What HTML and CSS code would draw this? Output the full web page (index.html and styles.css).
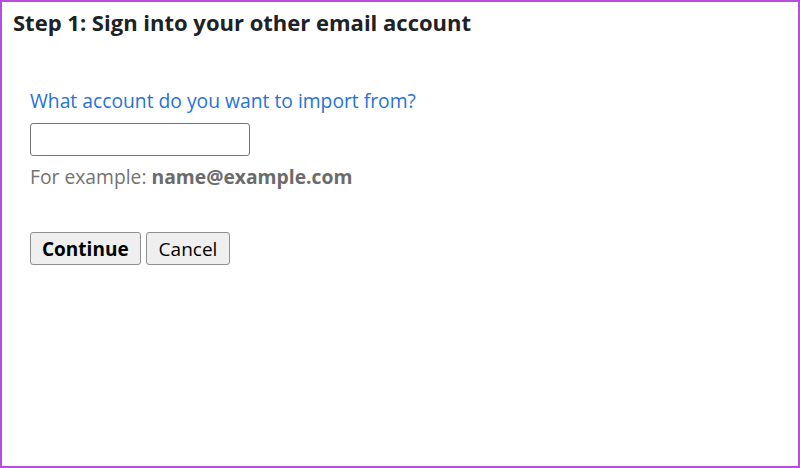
FILE: index.html
```html
<!DOCTYPE html>
<html lang="en">
<head>
    <meta charset="UTF-8">
    <meta name="viewport" content="width=device-width, initial-scale=1.0">
    <title>Import mail and contacts</title>
    <link rel="stylesheet" href="styles.css">
</head>
<body>
    <div class="frame">
        <h1 class="step-title">Step 1: Sign into your other email account</h1>

        <form class="import-form" onsubmit="return false">
            <label class="field-label" for="account">What account do you want to import from?</label>
            <input type="text" class="account-input" id="account">
            <p class="hint">For example: <b>name@example.com</b></p>

            <div class="actions">
                <button class="button primary" type="submit">Continue</button>
                <button class="button" type="button">Cancel</button>
            </div>
        </form>
    </div>
</body>
</html>
```

FILE: styles.css
```css
html, body {
    margin: 0;
    padding: 0;
    background-color: #fff;
}
body {
    font-family: 'Open Sans', Roboto, 'Liberation Sans', Arial, sans-serif;
}
.frame {
    box-sizing: border-box;
    width: 800px;
    height: 468px;
    border: 2px solid #b64ee2;
    padding: 6px 0 0 11px;
}
.step-title {
    margin: 0;
    font-size: 22px;
    font-weight: 700;
    color: #202124;
    line-height: 28px;
}
.import-form {
    margin-top: 53px;
    padding-left: 17px;
}
.field-label {
    display: block;
    font-size: 19.3px;
    color: #2672d8;
    line-height: 24px;
}
.account-input {
    display: block;
    box-sizing: border-box;
    width: 220px;
    height: 33px;
    margin-top: 10px;
    border: 1px solid #767676;
    border-radius: 3px;
    font-size: 16px;
    padding: 0 6px;
}
.account-input:focus {
    outline: none;
    border-color: #1a73e8;
}
.hint {
    margin: 9px 0 0;
    font-size: 19.3px;
    line-height: 24px;
    color: #737373;
}
.hint b {
    color: #6b6b6b;
}
.actions {
    display: flex;
    gap: 5px;
    margin-top: 43px;
}
.button {
    box-sizing: border-box;
    height: 33px;
    padding: 0 11px;
    font-family: 'Open Sans', Roboto, 'Liberation Sans', Arial, sans-serif;
    font-size: 19px;
    color: #000;
    background-color: #efefef;
    border: 1px solid #8f8f8f;
    border-radius: 3px;
    cursor: pointer;
}
.button.primary {
    font-weight: 700;
}
.button.secondary,
.button:not(.primary) {
    padding: 0 12px;
}
.button:hover {
    background-color: #e5e5e5;
}
```
